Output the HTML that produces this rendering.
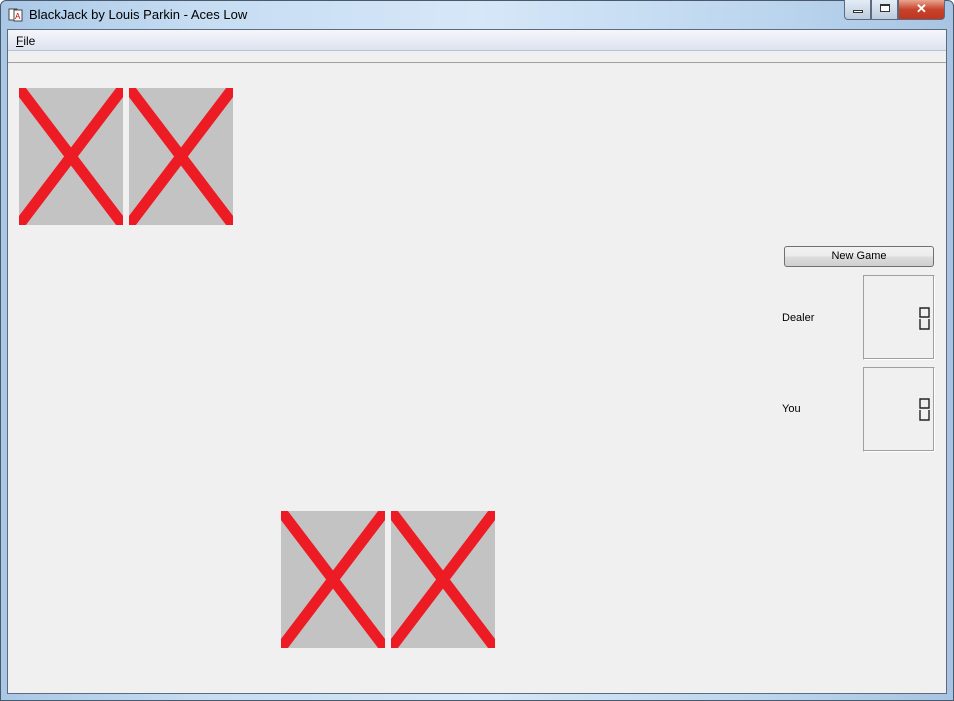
<!DOCTYPE html>
<html><head><style>
*{margin:0;padding:0;box-sizing:border-box}
body{width:954px;height:701px;position:relative;overflow:hidden;font-family:"Liberation Sans",sans-serif;font-size:12px;background:#fff}
.frame{position:absolute;left:0;top:0;width:954px;height:701px;border-radius:6px 6px 0 0;background:linear-gradient(90deg,#a9c8e6 0%,#c5dcf2 20%,#d6e7f8 50%,#bcd6ee 80%,#a7c4e2 100%);border:1px solid #4a5a6c}
.title{position:absolute;left:29px;top:7px;font-size:13px;color:#000}
.client{position:absolute;left:7px;top:29px;width:940px;height:665px;background:#f0f0f0;border:1px solid #5d6b7c}
.menu{position:absolute;left:0;top:0;width:938px;height:21px;background:linear-gradient(#f5f7fb,#dde3f0);border-bottom:1px solid #b8c2d4}
.menu span{position:absolute;left:8px;top:4px;font-size:12px}
.tb{position:absolute;left:0;top:21px;width:938px;height:12px;border-bottom:1px solid #a0a0a0;background:#f0f0f0}
.btn{position:absolute;left:784px;top:246px;width:150px;height:21px;border:1px solid #707070;border-radius:3px;background:linear-gradient(#f2f2f2 0%,#ebebeb 50%,#dddddd 51%,#cfcfcf 100%);text-align:center;line-height:19px;font-size:11px}
.lbl{position:absolute;font-size:11px}
.lcd{position:absolute;width:72px;height:85px;border:1px solid #a0a0a0;border-right-color:#fff;border-bottom-color:#fff;box-shadow:inset -1px -1px 0 #a0a0a0}
.wb{position:absolute;top:0;height:20px;border:1px solid #5a6a80;border-top:none}
</style></head><body>
<div class="frame"></div>
<svg style="position:absolute;left:8px;top:7px" width="16" height="16"><rect x="1" y="2" width="8" height="11" fill="#fff" stroke="#444"/><rect x="6" y="3" width="8" height="11" fill="#fff" stroke="#444"/><text x="7" y="12" font-size="8" fill="#c00" font-family="Liberation Sans">A</text></svg>
<div class="title">BlackJack by Louis Parkin - Aces Low</div>
<div class="wb" style="left:844px;width:27px;border-radius:0 0 0 4px;background:linear-gradient(#e4edf7,#bccbdd)"><div style="position:absolute;left:8px;top:10px;width:10px;height:3px;border:1px solid #333;background:#fff"></div></div>
<div class="wb" style="left:871px;width:27px;background:linear-gradient(#e4edf7,#bccbdd)"><div style="position:absolute;left:8px;top:4px;width:10px;height:8px;border:1px solid #333;border-top-width:2px;background:#fff"></div></div>
<div class="wb" style="left:898px;width:47px;border-radius:0 0 4px 0;background:linear-gradient(#e9a58f,#c7432c 50%,#c03520)"><div style="position:absolute;left:0;width:100%;top:1px;text-align:center;color:#fff;font-weight:bold;font-size:13px">✕</div></div>
<div class="client">
<div class="menu"><span><u>F</u>ile</span></div>
<div class="tb"></div>
</div>
<svg style="position:absolute;left:0;top:0" width="954" height="701">
<defs><g id="c"><rect width="104" height="137" fill="#c3c3c3"/><path d="M0 0L104 137M104 0L0 137" stroke="#ed1c24" stroke-width="11"/></g>
<clipPath id="cp"><rect width="104" height="137"/></clipPath></defs>
<g transform="translate(19,88)" clip-path="url(#cp)"><use href="#c"/></g>
<g transform="translate(129,88)" clip-path="url(#cp)"><use href="#c"/></g>
<g transform="translate(281,511)" clip-path="url(#cp)"><use href="#c"/></g>
<g transform="translate(391,511)" clip-path="url(#cp)"><use href="#c"/></g>
<g fill="none" stroke="#222" stroke-width="1.4">
<path d="M920 308H929V317H920ZM920 319V329H929V319"/>
<path d="M920 399H929V408H920ZM920 410V420H929V410"/>
</g>
</svg>
<div class="btn">New Game</div>
<div class="lbl" style="left:782px;top:312px">Dealer</div>
<div class="lbl" style="left:782px;top:403px">You</div>
<div class="lcd" style="left:863px;top:275px"></div>
<div class="lcd" style="left:863px;top:367px"></div>
</body></html>
